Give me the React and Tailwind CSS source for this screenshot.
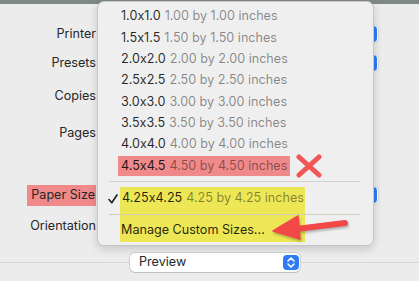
const items = [
  ["1.0x1.0", "1.00 by 1.00 inches"],
  ["1.5x1.5", "1.50 by 1.50 inches"],
  ["2.0x2.0", "2.00 by 2.00 inches"],
  ["2.5x2.5", "2.50 by 2.50 inches"],
  ["3.0x3.0", "3.00 by 3.00 inches"],
  ["3.5x3.5", "3.50 by 3.50 inches"],
  ["4.0x4.0", "4.00 by 4.00 inches"],
];

function Stepper({ className }) {
  return (
    <div className={"flex items-center justify-center rounded-[4px] bg-[#2f7bf5] " + className}>
      <svg width="8" height="11" viewBox="0 0 8 11" fill="none" stroke="white" strokeWidth="1.6" strokeLinecap="round" strokeLinejoin="round">
        <path d="M1 4 L4 1 L7 4" />
        <path d="M1 7 L4 10 L7 7" />
      </svg>
    </div>
  );
}

function Row({ label, mt, button, highlight }) {
  return (
    <div className={"flex items-center h-[18px] " + mt}>
      <div className="w-[96px] flex justify-end">
        {highlight ? (
          <span className="flex items-center h-[21px] pl-[4px] pr-[1px] bg-[#f08a8a]">{label}</span>
        ) : (
          <span>{label}</span>
        )}
      </div>
      {button ? (
        <div className="ml-[8px] w-[274px] h-[18px] flex items-center justify-end rounded-[5px] bg-white shadow-[0_0_0_1px_rgba(0,0,0,0.08)] pr-[1px]">
          <Stepper className="w-[16px] h-[16px]" />
        </div>
      ) : null}
    </div>
  );
}

export default function App() {
  return (
    <div className="relative w-[419px] h-[281px] overflow-hidden bg-[#ececec] font-[Inter,sans-serif] [font-feature-settings:'calt'_0] text-[12.6px] leading-none text-[#262626]">
      <div className="h-[4px] bg-[#7d8985]" />
      <div className="flex flex-col">
        <Row label="Printer" mt="mt-[21px]" button />
        <Row label="Presets" mt="mt-[11px]" button />
        <Row label="Copies" mt="mt-[15px]" />
        <Row label="Pages" mt="mt-[19px]" />
        <Row label="Paper Size" mt="mt-[44px]" button highlight />
        <Row label="Orientation" mt="mt-[13px]" />
        <div className="mt-[18px] flex items-center h-[19px]">
          <div className="w-[130px] h-px bg-[#d6d6d6]" />
          <div className="w-[170px] h-[19px] flex items-center justify-between rounded-[5px] bg-white shadow-[0_0_0_1px_rgba(0,0,0,0.1),0_1px_1px_rgba(0,0,0,0.1)] pl-[9px] pr-[1px]">
            <span>Preview</span>
            <Stepper className="w-[16px] h-[15px]" />
          </div>
          <div className="flex-1 h-px bg-[#d6d6d6]" />
        </div>
      </div>

      {/* popup menu */}
      <div className="absolute left-[97px] top-[1px] w-[277px] h-[245px] rounded-[7px] border border-[#c6c6c6] bg-[#efefef] shadow-[0_3px_9px_rgba(0,0,0,0.16)] pt-[4px]">
        <div className="absolute left-[22px] top-[185px] w-[185px] h-[55px] bg-[#ede755]" />
        <div className="relative flex flex-col">
          {items.map(([a, b]) => (
            <div key={a} className="h-[21.33px] flex items-center pl-[23px]">
              <span className="text-black/85">{a}</span>
              <span className="ml-[4px] text-black/45">{b}</span>
            </div>
          ))}
          <div className="h-[21.33px] flex items-center pl-[20px]">
            <span className="h-[20px] flex items-center px-[3px] bg-[#f08a8a]">
              <span className="text-black/85">4.5x4.5</span>
              <span className="ml-[4px] text-black/45">4.50 by 4.50 inches</span>
            </span>
          </div>
          <div className="h-[10px] flex items-center pl-[11px] pr-[13px]">
            <div className="w-full h-px bg-[#d0d0d0]" />
          </div>
          <div className="h-[24px] flex items-center pl-[10px]">
            <svg className="mr-[4px]" width="10" height="10" viewBox="0 0 10 10" fill="none" stroke="#1f1f1f" strokeWidth="1.6" strokeLinecap="round" strokeLinejoin="round">
              <path d="M1 5.5 L3.8 8.8 L9 1" />
            </svg>
            <span className="text-black/85">4.25x4.25</span>
            <span className="ml-[4px] text-black/45">4.25 by 4.25 inches</span>
          </div>
          <div className="h-[8px] flex items-center pl-[11px] pr-[13px]">
            <div className="w-full h-px bg-[#cfcfb8]" />
          </div>
          <div className="h-[24px] flex items-center pl-[23px]">
            <span className="text-black/85">Manage Custom Sizes...</span>
          </div>
        </div>
      </div>

      {/* red X annotation */}
      <svg className="absolute left-[296px] top-[154px]" width="26" height="24" viewBox="0 0 26 24">
        <path d="M3 3 L23 21 M23 3 L3 21" stroke="#f25656" strokeWidth="5" strokeLinecap="round" />
      </svg>

      {/* red arrow annotation */}
      <svg className="absolute left-[266px] top-[208px] drop-shadow-[1px_2px_1px_rgba(0,0,0,0.25)]" width="88" height="38" viewBox="0 0 88 38">
        <path d="M30 21 L79 15" stroke="#f24848" strokeWidth="6" strokeLinecap="round" />
        <path d="M7 23 L32 8 L34 31 Z" fill="#f24848" stroke="#f24848" strokeWidth="1.5" strokeLinejoin="round" />
      </svg>
    </div>
  );
}
